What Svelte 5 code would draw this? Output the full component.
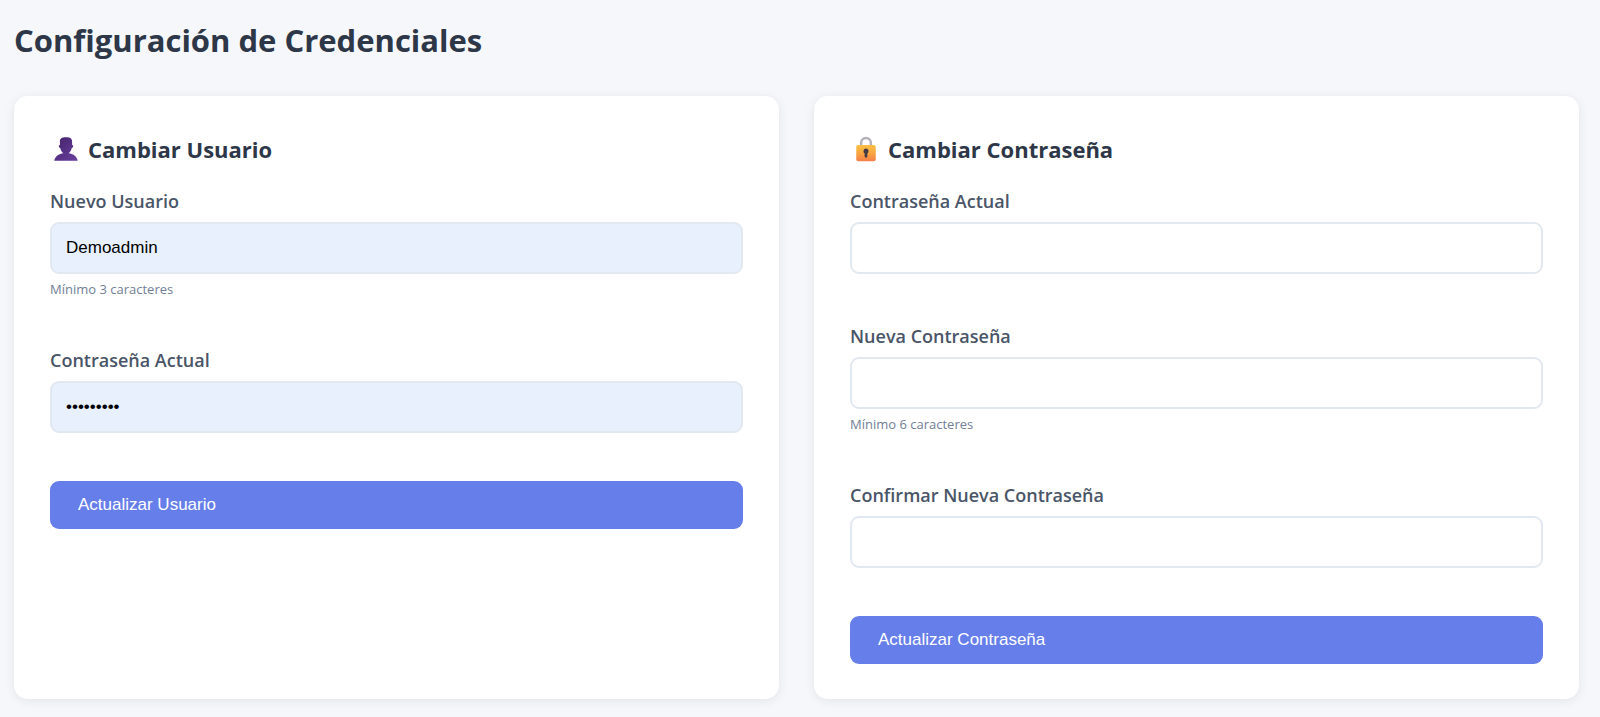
<script lang="ts">
  let username = $state('Demoadmin')
  let userPassword = $state('contrasen')
  let currentPassword = $state('')
  let newPassword = $state('')
  let confirmPassword = $state('')

  function submit(event: SubmitEvent) {
    event.preventDefault()
  }
</script>

<main class="page">
  <h1>Configuración de Credenciales</h1>

  <div class="cards">
    <section class="card">
      <h2>
        <svg class="icon" viewBox="0 0 32 32" aria-hidden="true">
          <defs>
            <linearGradient id="user-fill" x1="0" y1="0" x2="1" y2="1">
              <stop offset="0" stop-color="#432269" />
              <stop offset="1" stop-color="#6a40a0" />
            </linearGradient>
          </defs>
          <path fill="url(#user-fill)" d="M16 1.500c-5.600 0-7.500 1.500-7.500 5.500v4c-1.300.1-1.500 1-1.300 1.900.2 1 .8 1.700 1.700 1.800.5 2.800 1.900 5 3.900 6.500C6.500 22 2.500 25.500 1.500 30.500h29c-1-5-5-8.500-11.300-9.300 2-1.500 3.400-3.700 3.900-6.500.9-.1 1.500-.8 1.700-1.800.2-.9 0-1.800-1.300-1.900V7c0-4-1.900-5.500-7.500-5.500z" />
        </svg>
        Cambiar Usuario
      </h2>
      <form onsubmit={submit}>
        <div class="field">
          <label for="username">Nuevo Usuario</label>
          <input id="username" class="filled" type="text" bind:value={username} minlength="3" />
          <small>Mínimo 3 caracteres</small>
        </div>
        <div class="field">
          <label for="user-password">Contraseña Actual</label>
          <input id="user-password" class="filled" type="password" bind:value={userPassword} />
        </div>
        <button type="submit">Actualizar Usuario</button>
      </form>
    </section>

    <section class="card">
      <h2>
        <svg class="icon" viewBox="0 0 32 32" aria-hidden="true">
          <defs>
            <linearGradient id="lock-fill" x1="0" y1="0" x2="0" y2="1">
              <stop offset="0" stop-color="#fcc045" />
              <stop offset="0.5" stop-color="#f9a73f" />
              <stop offset="1" stop-color="#f47f4b" />
            </linearGradient>
          </defs>
          <path fill="none" stroke="#b5b1bb" stroke-width="3" d="M10 12V8.500a6 6 0 0 1 12 0V12" />
          <rect x="4" y="11" width="24" height="20" rx="2.500" fill="url(#lock-fill)" />
          <path fill="#433b45" d="M16 15.500a3.200 3.200 0 0 0-1.700 5.900V25a1.700 1.700 0 0 0 3.400 0v-3.600A3.200 3.200 0 0 0 16 15.500z" />
        </svg>
        Cambiar Contraseña
      </h2>
      <form onsubmit={submit}>
        <div class="field">
          <label for="current-password">Contraseña Actual</label>
          <input id="current-password" type="password" bind:value={currentPassword} />
        </div>
        <div class="field">
          <label for="new-password">Nueva Contraseña</label>
          <input id="new-password" type="password" bind:value={newPassword} minlength="6" />
          <small>Mínimo 6 caracteres</small>
        </div>
        <div class="field">
          <label for="confirm-password">Confirmar Nueva Contraseña</label>
          <input id="confirm-password" type="password" bind:value={confirmPassword} />
        </div>
        <button type="submit">Actualizar Contraseña</button>
      </form>
    </section>
  </div>
</main>

<style>
  :global(body) {
    margin: 0;
    background: #f5f7fb;
  }

  .page {
    padding: 16px 21px 18px 14px;
    font-family: 'Segoe UI', 'Open Sans', 'Noto Sans', sans-serif;
    color: #2d3748;
  }

  h1 {
    margin: 0 0 32px;
    font-size: 31px;
    font-weight: 700;
    line-height: 48px;
  }

  .cards {
    display: grid;
    grid-template-columns: repeat(2, minmax(0, 1fr));
    gap: 35px;
  }

  .card {
    padding: 35px 36px;
    background: #fff;
    border-radius: 14px;
    box-shadow: 0 2px 11px rgba(0, 0, 0, 0.08);
  }

  h2 {
    display: flex;
    align-items: center;
    gap: 9px;
    margin: 0 0 20px;
    padding-left: 3px;
    font-size: 22px;
    font-weight: 700;
    line-height: 36px;
  }

  .icon {
    width: 26px;
    height: 26px;
  }

  form {
    display: flex;
    flex-direction: column;
    gap: 48px;
  }

  .field {
    display: flex;
    flex-direction: column;
  }

  label {
    margin-bottom: 7px;
    font-size: 18px;
    font-weight: 600;
    line-height: 28px;
    color: #4a5568;
  }

  input {
    box-sizing: border-box;
    width: 100%;
    height: 52px;
    padding: 0 14px;
    border: 2px solid #e2e8f0;
    border-radius: 9px;
    background: #fff;
    font-family: Arial, 'Liberation Sans', sans-serif;
    font-size: 17px;
    color: #000;
  }

  input.filled {
    background: #e8f0fe;
  }

  input:focus {
    outline: none;
    border-color: #667eea;
  }

  small {
    margin-top: 7px;
    font-size: 13px;
    line-height: 17px;
    color: #718096;
  }

  button {
    padding: 14px 28px;
    border: none;
    border-radius: 9px;
    background: #667eea;
    font-family: Arial, 'Liberation Sans', sans-serif;
    font-size: 17px;
    line-height: 20px;
    text-align: left;
    color: #fff;
    cursor: pointer;
  }

  button:hover {
    background: #5a6fd8;
  }
</style>
